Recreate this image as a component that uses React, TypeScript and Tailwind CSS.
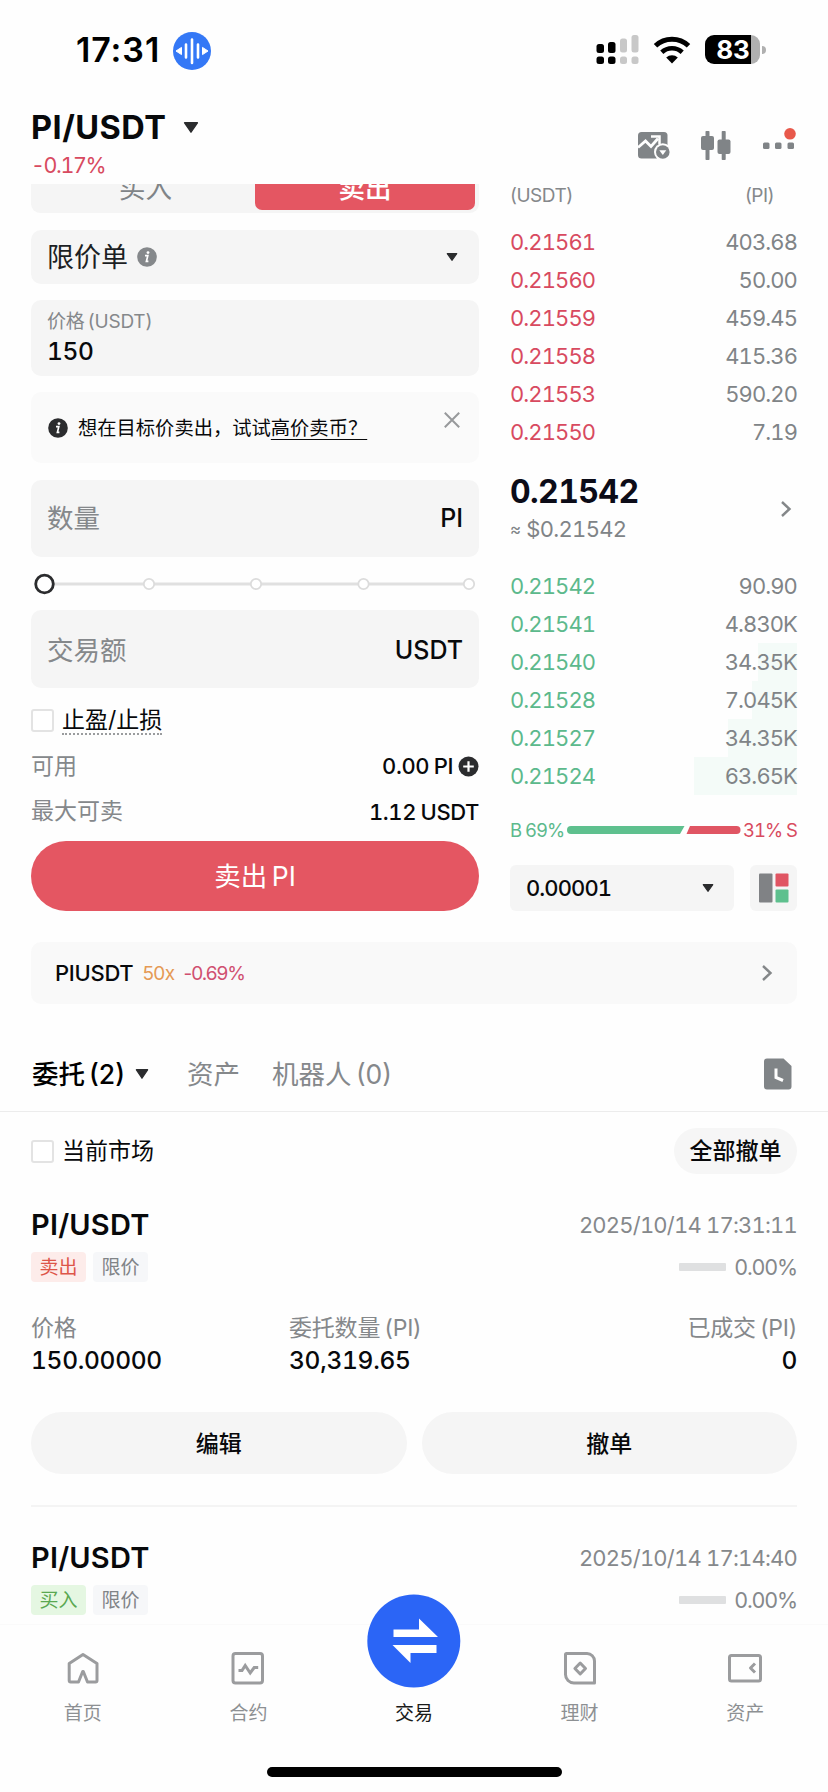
import React from "react";

const NUM = "tabular-nums";

function Caret({ w, h, className = "" }: { w: number; h: number; className?: string }) {
  return (
    <svg width={w} height={h} viewBox="0 0 16 10" preserveAspectRatio="none" className={`shrink-0 ${className}`}>
      <path d="M1.6.8h12.8L8 9.2z" fill="#2b2c2e" stroke="#2b2c2e" strokeWidth="1.4" strokeLinejoin="round" />
    </svg>
  );
}

function Chevron() {
  return (
    <svg width="12" height="18" viewBox="0 0 12 18" fill="none" className="shrink-0">
      <path d="M2 2l7.5 7L2 16" stroke="#848789" strokeWidth="2.4" />
    </svg>
  );
}

function Info({ color }: { color: string }) {
  return (
    <svg width="20" height="20" viewBox="0 0 20 20" className="shrink-0">
      <circle cx="10" cy="10" r="9.8" fill={color} />
      <circle cx="11" cy="5.6" r="1.4" fill="#fff" />
      <path d="M8 8.6h2.8L9.4 14.4h2" stroke="#fff" strokeWidth="1.7" fill="none" />
    </svg>
  );
}

function StatusBar() {
  return (
    <div className="flex h-[99px] shrink-0 items-center pl-[76px]">
      <span className="w-[97px] text-[34px] font-semibold leading-none tracking-[0.9px] text-black">17:31</span>
      <svg width="38" height="38" viewBox="0 0 38 38" className="mt-[2px]">
        <circle cx="19" cy="19" r="19" fill="#3478f6" />
        <path d="M13 12.500v13M19 7.500v23.500M25 12.500v13" stroke="#fff" strokeWidth="2.600" strokeLinecap="round" />
        <path d="M3 19l5.500-3.600v7.200zM35 19l-5.500-3.600v7.200z" fill="#fff" stroke="#fff" strokeWidth="1" strokeLinejoin="round" />
      </svg>
      <div className="ml-auto mr-[62px] flex items-center">
        <svg width="43" height="29" viewBox="0 0 43 29">
          <g fill="#000">
            <rect x="0.500" y="9" width="7.500" height="9" rx="2.500" />
            <rect x="12" y="7" width="7.500" height="11" rx="2.500" />
            <rect x="0.500" y="21.500" width="7.500" height="7.500" rx="2.500" />
            <rect x="12" y="21.500" width="7.500" height="7.500" rx="2.500" />
          </g>
          <g fill="#c8c8c8">
            <rect x="24" y="3.500" width="7" height="14" rx="2.500" />
            <rect x="35.500" y="0" width="7" height="17.500" rx="2.500" />
            <rect x="24" y="21.500" width="7" height="7.500" rx="2.500" />
            <rect x="35.500" y="21.500" width="7" height="7.500" rx="2.500" />
          </g>
        </svg>
        <svg width="38" height="28" viewBox="0 0 38 28" fill="none" className="ml-[14px]">
          <path d="M2.500 9.800a24 24 0 0 1 33 0" stroke="#000" strokeWidth="5" />
          <path d="M8.800 16.300a15 15 0 0 1 20.400 0" stroke="#000" strokeWidth="4.600" />
          <path d="M19 27.500l-5.800-5.900a8.200 8.200 0 0 1 11.600 0z" fill="#000" />
        </svg>
        <div className="ml-[14px] flex h-[29px] w-[55px] items-center justify-center rounded-[9px] bg-[linear-gradient(90deg,#000_0_46px,#b0b0b0_46px)] pl-[1px] text-[26px] font-bold leading-none text-white">
          83
        </div>
        <svg width="4" height="8" viewBox="0 0 4 8" className="ml-[2px]">
          <path d="M0 0a4 4 0 0 1 0 8z" fill="#b0b0b0" />
        </svg>
      </div>
    </div>
  );
}

function Header() {
  return (
    <div className="flex h-[85px] shrink-0 justify-between pl-[31px] pr-[32px]">
      <div>
        <div className="flex h-[57px] items-center">
          <span className="w-[152px] whitespace-nowrap pt-[2px] text-[32.500px] font-bold leading-none tracking-[0.500px]">PI/USDT</span>
          <Caret w={16} h={11} />
        </div>
        <div className={`${NUM} flex h-[20px] items-center text-[21.500px] leading-none tracking-[-1.4px] text-[#d84a60]`}>-0.17%</div>
      </div>
      <div className="flex items-start pt-[28px]">
        <svg width="34" height="34" viewBox="0 0 34 34" className="mr-[29px]">
          <rect x="0" y="5" width="29.500" height="26.500" rx="3.500" fill="#808487" />
          <path d="M0 20.500l7.500-6.500 5.500 5.500 7-8" stroke="#fefefe" strokeWidth="2.800" fill="none" />
          <path d="M13 9.500h8.500v8" stroke="#fefefe" strokeWidth="2.500" fill="none" />
          <circle cx="24.800" cy="25" r="8.800" fill="#fefefe" />
          <circle cx="24.800" cy="25" r="6.800" fill="#808487" />
          <path d="M21.300 23.200h7l-3.500 4.800z" fill="#fefefe" />
        </svg>
        <svg width="30" height="34" viewBox="0 0 30 34" fill="#808487" className="mr-[32px]">
          <rect x="4.500" y="4" width="4" height="29" rx=".8" />
          <rect x="0" y="9" width="13" height="14" rx="2" />
          <rect x="20.700" y="4" width="4" height="29" rx=".8" />
          <rect x="16.500" y="12.500" width="13" height="14.500" rx="2" />
        </svg>
        <svg width="33" height="34" viewBox="0 0 33 34">
          <g fill="#808487">
            <rect x="0" y="15.500" width="6.500" height="6.500" rx="1.500" />
            <rect x="12" y="15.500" width="6.500" height="6.500" rx="1.500" />
            <rect x="24.500" y="15.500" width="6.500" height="6.500" rx="1.500" />
          </g>
          <circle cx="27" cy="6.800" r="5.800" fill="#e8594b" />
        </svg>
      </div>
    </div>
  );
}

function Slider() {
  return (
    <svg width="448" height="53" viewBox="0 0 448 53" className="shrink-0">
      <path d="M14 27H438" stroke="#e0e0e0" strokeWidth="3" />
      {[118, 225, 332.5, 438].map((x) => (
        <circle key={x} cx={x} cy="27" r="5.200" fill="#fff" stroke="#dcdcdc" strokeWidth="1.800" />
      ))}
      <circle cx="13.500" cy="27" r="8.800" fill="#fff" stroke="#2b2c2e" strokeWidth="2.800" />
    </svg>
  );
}

function Checkbox() {
  return <div className="h-[23px] w-[23px] shrink-0 rounded-[3px] border-2 border-[#e3e3e3] bg-white" />;
}

function OrderForm() {
  return (
    <div className="flex w-[448px] flex-col">
      <div className="flex h-[29px] flex-col justify-end overflow-hidden rounded-b-[9px] bg-[#f5f5f5]">
        <div className="flex h-[54px] shrink-0 text-[26.500px] leading-none">
          <div className="flex flex-1 items-center justify-center pl-[5px] pt-[4px] text-[#808487]">买入</div>
          <div className="mb-[3px] mr-[4px] flex w-[220px] items-center justify-center rounded-[7px] bg-[#e45662] pt-[7px] font-medium text-white">卖出</div>
        </div>
      </div>
      <div className="mt-[17px] flex h-[54px] items-center rounded-[10px] bg-[#f5f5f5] pl-[16px] pr-[21px]">
        <span className="mr-[9px] text-[27px] leading-none text-[#1c1f24]">限价单</span>
        <Info color="#85888b" />
        <Caret w={12} h={8} className="ml-auto" />
      </div>
      <div className="mt-[16px] flex h-[76px] flex-col rounded-[10px] bg-[#f5f5f5] pl-[16px] pt-[9px]">
        <div className="flex h-[24px] items-center text-[19px] leading-none tracking-[-0.2px] text-[#85888b] [word-spacing:-2px]">价格 (USDT)</div>
        <div className={`${NUM} flex h-[37px] items-center text-[24.500px] font-medium leading-none tracking-[-0.4px]`}>150</div>
      </div>
      <div className="mt-[16px] flex h-[71px] items-center rounded-[10px] bg-[#fafafa] pl-[17px] pr-[19px]">
        <Info color="#2b2c2e" />
        <span className="ml-[10px] whitespace-nowrap text-[19.300px] leading-[24px]">
          想在目标价卖出，试试<span className="underline decoration-1 underline-offset-4">高价卖币？</span>
        </span>
        <svg width="16" height="16" viewBox="0 0 16 16" className="mb-[15px] ml-auto">
          <path d="M.8.800l14.400 14.400M15.200.800L.8 15.200" stroke="#97999b" strokeWidth="2" />
        </svg>
      </div>
      <div className="mt-[17px] flex h-[77px] items-center justify-between rounded-[10px] bg-[#f5f5f5] px-[16px] leading-none">
        <span className="text-[26.500px] text-[#85888b]">数量</span>
        <span className="text-[25px] font-medium">PI</span>
      </div>
      <Slider />
      <div className="flex h-[78px] items-center justify-between rounded-[10px] bg-[#f5f5f5] px-[16px] pt-[2px] leading-none">
        <span className="text-[26.500px] text-[#85888b]">交易额</span>
        <span className="text-[25px] font-medium">USDT</span>
      </div>
      <div className="flex h-[64px] items-center gap-[8px]">
        <Checkbox />
        <span className="mt-[2px] border-b-2 border-dotted border-[#9a9c9e] text-[23px] leading-[25px]">止盈/止损</span>
      </div>
      <div className="flex h-[28px] items-center text-[22px] leading-none">
        <span className="mr-auto text-[23px] text-[#85888b]">可用</span>
        <span className={`${NUM} mr-[5px] font-medium tracking-[-0.4px] [word-spacing:-1px]`}>0.00 PI</span>
        <svg width="21" height="21" viewBox="0 0 21 21">
          <circle cx="10.500" cy="10.500" r="10" fill="#2b2c2e" />
          <path d="M10.500 5.200v10.600M5.200 10.500h10.600" stroke="#fff" strokeWidth="2.200" />
        </svg>
      </div>
      <div className="flex h-[61px] items-center justify-between pt-[2px] text-[22px] leading-none">
        <span className="text-[23px] text-[#85888b]">最大可卖</span>
        <span className={`${NUM} font-medium tracking-[-0.4px] [word-spacing:-1px]`}>1.12 USDT</span>
      </div>
      <button className="flex h-[70px] items-center justify-center rounded-full bg-[#e45662] pt-[1px] text-[26.500px] leading-none text-white [word-spacing:-3px]">
        卖出 PI
      </button>
    </div>
  );
}

const ASKS = [
  ["0.21561", "403.68"],
  ["0.21560", "50.00"],
  ["0.21559", "459.45"],
  ["0.21558", "415.36"],
  ["0.21553", "590.20"],
  ["0.21550", "7.19"],
];

const BIDS: [string, string, number][] = [
  ["0.21542", "90.90", 0],
  ["0.21541", "4.830K", 0],
  ["0.21540", "34.35K", 39],
  ["0.21528", "7.045K", 45],
  ["0.21527", "34.35K", 69],
  ["0.21524", "63.65K", 103],
];

function OrderBook() {
  return (
    <div className="flex w-[287px] flex-col">
      <div className="flex h-[23px] items-center justify-between pr-[23px] text-[19px] leading-none tracking-[-0.5px] text-[#85888b]">
        <span>(USDT)</span>
        <span>(PI)</span>
      </div>
      <div className="mt-[16px]">
        {ASKS.map(([p, q]) => (
          <div key={p} className={`${NUM} flex h-[38px] items-center justify-between text-[22px] leading-none tracking-[-0.9px]`}>
            <span className="text-[#d84a60]">{p}</span>
            <span className="text-[#808487]">{q}</span>
          </div>
        ))}
      </div>
      <div className="flex h-[116px] items-center justify-between pr-[5px]">
        <div className="pt-[3px]">
          <div className={`${NUM} flex h-[37px] items-center text-[32px] font-bold leading-none tracking-[-0.6px] text-[#0c0c18]`}>0.21542</div>
          <div className={`${NUM} flex h-[38px] items-center text-[22px] leading-none tracking-[-0.7px] text-[#808487]`}>
            <span className="mr-[6px] text-[17px]">≈</span>
            <span>$0.21542</span>
          </div>
        </div>
        <Chevron />
      </div>
      {BIDS.map(([p, q, depth]) => (
        <div
          key={p}
          className={`${NUM} flex h-[38px] items-center justify-between bg-[linear-gradient(#f4fbf8,#f4fbf8)] bg-right bg-no-repeat text-[22px] leading-none tracking-[-0.9px]`}
          style={{ backgroundSize: `${depth}px 100%` }}
        >
          <span className="text-[#5cb98c]">{p}</span>
          <span className="text-[#808487]">{q}</span>
        </div>
      ))}
      <div className={`${NUM} flex h-[70px] items-center justify-between whitespace-nowrap text-[18.500px] leading-none tracking-[-1px]`}>
        <span className="w-[57px] text-[#5cb98c]">B {"69%"}</span>
        <svg width="174" height="8" viewBox="0 0 174 8" className="shrink-0">
          <path d="M4 0H117.500L113 8H4a4 4 0 0 1 0-8z" fill="#5ec08e" />
          <path d="M123 0H169.500a4 4 0 0 1 0 8H119.500z" fill="#e05563" />
        </svg>
        <span className="w-[56px] text-right text-[#d84a60]">{"31%"} S</span>
      </div>
      <div className="flex h-[46px] justify-between">
        <div className="flex w-[224px] items-center justify-between rounded-[6px] bg-[#f5f5f5] pl-[16px] pr-[20px]">
          <span className={`${NUM} text-[22px] font-medium leading-none tracking-[-0.9px]`}>0.00001</span>
          <Caret w={12} h={8} />
        </div>
        <div className="flex w-[47px] items-center justify-center rounded-[6px] bg-[#f5f5f5]">
          <svg width="30" height="30" viewBox="0 0 30 30">
            <rect x="0" y="0.500" width="13.500" height="29" rx="1" fill="#808285" />
            <rect x="16.500" y="0.500" width="13" height="13" rx="1" fill="#e05563" />
            <rect x="16.500" y="16.500" width="13" height="13" rx="1" fill="#5ec08e" />
          </svg>
        </div>
      </div>
    </div>
  );
}

function OrderHead({ side, time }: { side: "buy" | "sell"; time: string }) {
  const sideStyle = side === "sell" ? "bg-[#fdecea] text-[#dd5548]" : "bg-[#e5f7e2] text-[#5aa851]";
  return (
    <>
      <div className="flex h-[36px] items-center justify-between">
        <span className="pb-[2px] text-[29px] font-semibold leading-none tracking-[0.2px]">PI/USDT</span>
        <span className={`${NUM} text-[22px] leading-none tracking-[-0.8px] text-[#85888b]`}>{time}</span>
      </div>
      <div className="mt-[9px] flex h-[30px] items-center text-[19px] leading-none">
        <span className={`flex h-full w-[55px] items-center justify-center rounded-[4px] ${sideStyle}`}>
          {side === "sell" ? "卖出" : "买入"}
        </span>
        <span className="ml-[7px] flex h-full w-[55px] items-center justify-center rounded-[4px] bg-[#f6f7f9] text-[#808487]">限价</span>
        <span className="ml-auto mr-[8px] h-[8px] w-[47px] rounded-[1px] bg-[#dfe0e1]" />
        <span className={`${NUM} pt-[2px] text-[21.500px] tracking-[-1.2px] text-[#85888b]`}>0.00%</span>
      </div>
    </>
  );
}

function Orders() {
  return (
    <div>
      <div className="flex h-[108px] items-center border-b border-[#ececec] pl-[32px] pr-[36px] pt-[33px] text-[26.500px] leading-none text-[#85888b] [word-spacing:-3px]">
        <span className="whitespace-nowrap font-medium text-black">委托 (2)</span>
        <Caret w={14} h={10} className="ml-[10px]" />
        <span className="ml-[38px]">资产</span>
        <span className="ml-[32px]">机器人 (0)</span>
        <svg width="28" height="32" viewBox="0 0 28 32" className="ml-auto">
          <path d="M3 .5h16.500l8 7.500v20.500a3 3 0 0 1-3 3H3a3 3 0 0 1-3-3V3.500a3 3 0 0 1 3-3z" fill="#808487" />
          <path d="M12 10.500v9l7 3" stroke="#fefefe" strokeWidth="3" fill="none" />
        </svg>
      </div>
      <div className="px-[31px]">
        <div className="mt-[16px] flex h-[46px] items-center text-[23px] leading-none">
          <Checkbox />
          <span className="ml-[8px] pt-[1px]">当前市场</span>
          <span className="ml-auto flex h-[46px] w-[123px] items-center justify-center rounded-full bg-[#f6f6f6] font-medium">全部撤单</span>
        </div>
        <div className="mt-[33px]">
          <OrderHead side="sell" time="2025/10/14 17:31:11" />
          <div className="mt-[31px] flex">
            {[
              ["价格", "150.00000", "w-[258px]"],
              ["委托数量 (PI)", "30,319.65", "flex-1"],
              ["已成交 (PI)", "0", "text-right"],
            ].map(([label, value, cls]) => (
              <div key={label} className={cls}>
                <div className="text-[23px] leading-[30px] tracking-[-0.2px] text-[#85888b] [word-spacing:-2px]">{label}</div>
                <div className={`${NUM} text-[24.500px] font-medium leading-[34px] tracking-[-0.3px]`}>{value}</div>
              </div>
            ))}
          </div>
          <div className="mt-[35px] flex h-[62px] gap-[15px] text-[23px] font-medium leading-none">
            <button className="flex-1 rounded-full bg-[#f5f5f5] pt-[3px]">编辑</button>
            <button className="flex-1 rounded-full bg-[#f5f5f5] pt-[3px]">撤单</button>
          </div>
        </div>
        <div className="mb-[33px] mt-[31px] h-[2px] bg-[#f4f4f4]" />
        <OrderHead side="buy" time="2025/10/14 17:14:40" />
      </div>
    </div>
  );
}

function NavItem({ label, children }: { label: string; children: React.ReactNode }) {
  return (
    <div className="flex flex-1 flex-col items-center pt-[25px] text-[19px] leading-none text-[#8d9093]">
      <svg width="36" height="36" viewBox="0 0 36 36" fill="none" stroke="#9b9c9e" strokeWidth="3" strokeLinejoin="round">
        {children}
      </svg>
      <span className="mt-[18px]">{label}</span>
    </div>
  );
}

function BottomNav() {
  return (
    <div className="flex h-[168px] shrink-0 flex-col border-t border-[#fafafa] bg-[#fefefe]">
      <div className="flex h-[142px]">
        <NavItem label="首页">
          <path d="M4.200 13.500L18 4.500l14 9v17a1.500 1.500 0 0 1-1.500 1.500H22.500L18.300 21.500h-.6L13.500 32H5.700a1.500 1.500 0 0 1-1.500-1.500z" />
        </NavItem>
        <NavItem label="合约">
          <rect x="3" y="3.500" width="29.500" height="29.500" rx="2.500" />
          <path d="M8.500 20.500h3.500l3.200-5 5 7.500 4-5.500h4" strokeLinejoin="miter" />
        </NavItem>
        <div className="flex flex-1 flex-col items-center text-[19px] leading-none text-[#1a1a1a]">
          <svg width="94" height="94" viewBox="0 0 94 94" className="-mt-[31px] shrink-0">
            <circle cx="46.800" cy="47" r="46.500" fill="#2b65f6" />
            <g fill="#fff">
              <path d="M26.500 35.500H52V24.500L71 43H26.500z" />
              <path d="M69.500 51H25.500L43.500 69V59H69.500z" />
            </g>
          </svg>
          <span className="mt-[16px]">交易</span>
        </div>
        <NavItem label="理财">
          <path d="M4.500 3.500H25a7.500 7.500 0 0 1 7.500 7.500V33H12a8.500 8.500 0 0 1-8.500-8.500V4.500a1 1 0 0 1 1-1z" />
          <path d="M18.200 13l5.300 5.500-5.300 5.500-5.300-5.500z" />
        </NavItem>
        <NavItem label="资产">
          <rect x="2.500" y="5.500" width="31" height="25.500" rx="2" />
          <path d="M28 13.500l-4.500 4.500 4.500 4.500" />
        </NavItem>
      </div>
      <div className="mx-auto h-[10px] w-[295px] rounded-full bg-black" />
    </div>
  );
}

export default function App() {
  return (
    <div className="flex h-[1792px] w-[828px] flex-col overflow-hidden bg-[#fefefe] font-[Inter,'Noto_Sans_CJK_SC',sans-serif] text-[#08090b]">
      <StatusBar />
      <Header />
      <div className="min-h-0 flex-1 overflow-hidden">
        <div className="flex gap-[31px] pl-[31px]">
          <OrderForm />
          <OrderBook />
        </div>
        <div className="mx-[31px] mt-[31px] flex h-[62px] items-center rounded-[10px] bg-[#f9f9f9] pl-[24px] pr-[24px] leading-none">
          <span className="text-[22px] font-medium tracking-[-0.3px]">PIUSDT</span>
          <span className="ml-[9px] text-[19px] tracking-[-0.6px] text-[#e59a55]">50x</span>
          <span className="ml-[9px] text-[19px] tracking-[-1px] text-[#d05070]">-0.69%</span>
          <span className="ml-auto"><Chevron /></span>
        </div>
        <Orders />
      </div>
      <BottomNav />
    </div>
  );
}
